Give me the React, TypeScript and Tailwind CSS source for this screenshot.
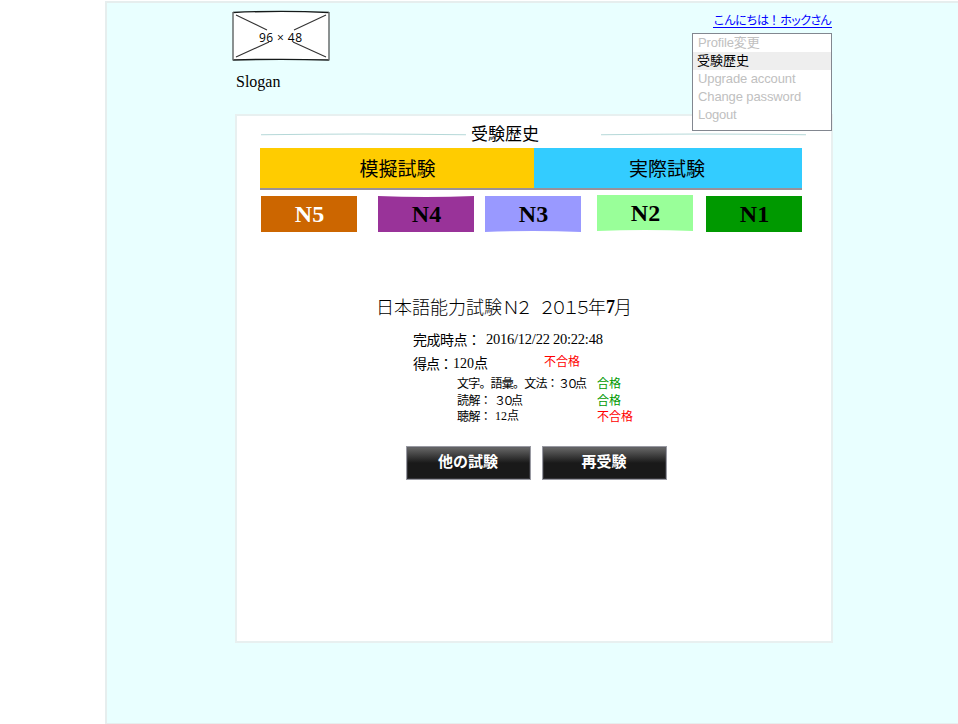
import React from "react";

const gothic = "font-['Noto_Sans_CJK_JP',sans-serif]";
const arial = "font-['Liberation_Sans','Noto_Sans_CJK_JP',sans-serif]";
const times = "font-['Liberation_Serif','Noto_Sans_CJK_JP',serif]";

function Placeholder() {
  return (
    <svg width="98" height="52" viewBox="0 0 98 52" fill="none">
      <path d="M1 2.5 Q49 0.3 97 2.5 V50 Q49 48.6 1 50Z" fill="#fff" />
      <path d="M1 2.5Q49 0.3 97 2.5M1 50Q49 48.6 97 50" stroke="#151a1a" strokeWidth="1.3" />
      <path d="M1 2V50.5M97 2V50.5" stroke="#686e6e" strokeWidth="1.5" />
      <path d="M4 5L35 20M94 5L62 20M4 47L37 32M94 47L61 32" stroke="#333" strokeWidth="1.1" />
      <text x="27" y="32" fontSize="12" textLength="43" fill="#000" fontFamily="Open Sans, sans-serif">96 × 48</text>
    </svg>
  );
}

function Rule() {
  return (
    <svg width="205" height="4" viewBox="0 0 205 4" fill="none" className="shrink-0">
      <path d="M0 2.8Q102 1.2 205 2.8" stroke="#b5d8d8" strokeWidth="1.1" />
    </svg>
  );
}

const menu = ["Profile変更", "受験歴史", "Upgrade account", "Change password", "Logout"];
const menuSpacing = ["tracking-[-0.15px]", "", "tracking-[-0.1px]", "tracking-[-0.12px]", "tracking-[-0.25px]"];

function AccountMenu() {
  return (
    <ul className={`absolute left-[460px] top-[30px] z-10 h-[98px] w-[140px] border border-[#828790] bg-white text-[13px] leading-[18px] ${arial}`}>
      {menu.map((label, i) => (
        <li
          key={label}
          className={`h-[18px] whitespace-nowrap ${menuSpacing[i]} ${i === 1 ? "bg-[#eeeeee] pl-[4px] leading-[17px] text-black" : "pl-[5px] text-[#c0c0c0]"}`}
        >
          {label}
        </li>
      ))}
    </ul>
  );
}

const levels = [
  { name: "N5", style: "bg-[#cc6600] text-white" },
  { name: "N4", style: "ml-[21px] bg-[#993399] text-black" },
  { name: "N3", style: "ml-[11px] bg-[#9999ff] text-black" },
  { name: "N2", style: "ml-[16px] -mt-px bg-[#99ff99] text-black" },
  { name: "N1", style: "ml-[13px] bg-[#009900] text-black" },
];

// Arched white highlight along the top or the bottom edge of a level tile.
function Arc({ bottom }: { bottom?: boolean }) {
  return (
    <svg className={`absolute left-0 ${bottom ? "bottom-0" : "top-0"}`} width="96" height="1" viewBox="0 0 96 1">
      <path d={bottom ? "M0 1Q48 -0.8 96 1Z" : "M0 0Q48 1.8 96 0Z"} fill="#fff" />
    </svg>
  );
}

function Action({ children }: { children: React.ReactNode }) {
  return (
    <button className={`h-[34px] w-[125px] border border-[#999aa2] bg-[linear-gradient(#696969_0%,#191919_50%,#191919_100%)] pb-[3px] pr-px text-[15px] font-bold leading-[28px] text-white shadow-[inset_0_0_0_1px_rgba(90,90,100,0.4)] ${gothic}`}>
      {children}
    </button>
  );
}

function Section({ label, score, labelStyle, passed }: { label: string; score: React.ReactNode; labelStyle: string; passed: boolean }) {
  return (
    <div className="flex h-[16.5px] whitespace-nowrap text-[12px] leading-[16px]">
      <span className={labelStyle}>{label}</span>
      <span className="flex flex-1">{score}</span>
      <span className={`w-[40px] ${passed ? "text-[#009900]" : "text-[#ff0000]"}`}>{passed ? "合格" : "不合格"}</span>
    </div>
  );
}

const thirty = (
  <>
    <span className="w-[17px] tracking-[-3.5px]">３０</span>
    <span>点</span>
  </>
);

export default function App() {
  return (
    <div className={`h-[724px] w-[958px] overflow-hidden bg-white pl-[105px] pt-px text-black ${gothic}`}>
      <div className="h-[723px] border-2 border-b border-r-0 border-[#e6eeee] bg-[#e9ffff] pl-[125px]">
        <div className="relative w-[601px]">
          <header className="flex h-[111px] justify-between">
            <div className="pt-[7px]">
              <Placeholder />
              <p className={`ml-[4px] mt-[9px] text-[16px] leading-[22px] ${times}`}>Slogan</p>
            </div>
            <a className="mr-px mt-[9px] flex h-[16px] w-[119px] whitespace-nowrap border-b border-[#0000ff] text-[12px] leading-[16px] text-[#0000ff]">
              <span className="w-[67px] tracking-[-1px]">こんにちは！</span>
              <span className="tracking-[-2px]">ホックさん</span>
            </a>
          </header>
          <AccountMenu />
          <main className="ml-[3px] h-[529px] border-2 border-[#e8f0f0] bg-white pl-[23px]">
            <div className="ml-px flex h-[32px] items-center pt-[3px]">
              <Rule />
              <h1 className="-mt-[2px] w-[135px] shrink-0 whitespace-nowrap pl-[5px] text-[17px] leading-[24px]">受験歴史</h1>
              <Rule />
            </div>
            <nav className="flex h-[42px] w-[542px] border-b-2 border-[#999299] text-center text-[19px] leading-[40px]">
              <div className="w-[274px] bg-[#ffcc00] pl-px">模擬試験</div>
              <div className="flex-1 bg-[#33ccff] pr-[2px]">実際試験</div>
            </nav>
            <div className="ml-px mt-[6px] flex items-start">
              {levels.map((l) => (
                <div key={l.name} className={`relative h-[36px] w-[96px] shrink-0 pl-px text-center text-[24px] font-bold leading-[36px] ${times} ${l.style}`}>
                  {l.name === "N4" && <Arc />}
                  {(l.name === "N3" || l.name === "N2") && <Arc bottom />}
                  {l.name}
                </div>
              ))}
            </div>
            <section className="ml-[116px] mt-[62px]">
              <h2 className="flex h-[26px] whitespace-nowrap text-[18px] font-light leading-[25px]">
                <span className="w-[126px]">日本語能力試験</span>
                <span className="w-[36px] tracking-[-5px]">Ｎ２</span>
                <span className="w-[50px] tracking-[-6px]">２０１５</span>
                <span className="w-[18px]">年</span>
                <span className={`w-[8px] font-bold leading-[27px] ${times}`}>7</span>
                <span>月</span>
              </h2>
              <div className="ml-[37px] mt-[9px] flex h-[20px] whitespace-nowrap text-[14px] leading-[20px]">
                <span className="w-[73px] tracking-[-0.5px]">完成時点：</span>
                <span className={`text-[14.5px] tracking-[-0.24px] ${times}`}>2016/12/22 20:22:48</span>
              </div>
              <div className="ml-[37px] mt-[4px] flex h-[20px] whitespace-nowrap text-[14px] leading-[20px]">
                <span className="w-[40px] tracking-[-1px]">得点：</span>
                <span className={`w-[91px] leading-[22px] ${times}`}>120点</span>
                <span className="-mt-[2px] text-[12px] text-[#ff0000]">不合格</span>
              </div>
              <div className="ml-[81px] mt-[2px] w-[180px]">
                <Section label="文字。語彙。文法：" labelStyle="w-[101px] tracking-[-0.8px]" score={thirty} passed />
                <Section label="読解：" labelStyle="w-[37px] tracking-[-0.6px]" score={thirty} passed />
                <Section label="聴解：" labelStyle="w-[38px] tracking-[-0.6px]" score={<span className={times}>12点</span>} passed={false} />
              </div>
              <div className="ml-[30px] mt-[21px] flex gap-[11px]">
                <Action>他の試験</Action>
                <Action>再受験</Action>
              </div>
            </section>
          </main>
        </div>
      </div>
    </div>
  );
}
